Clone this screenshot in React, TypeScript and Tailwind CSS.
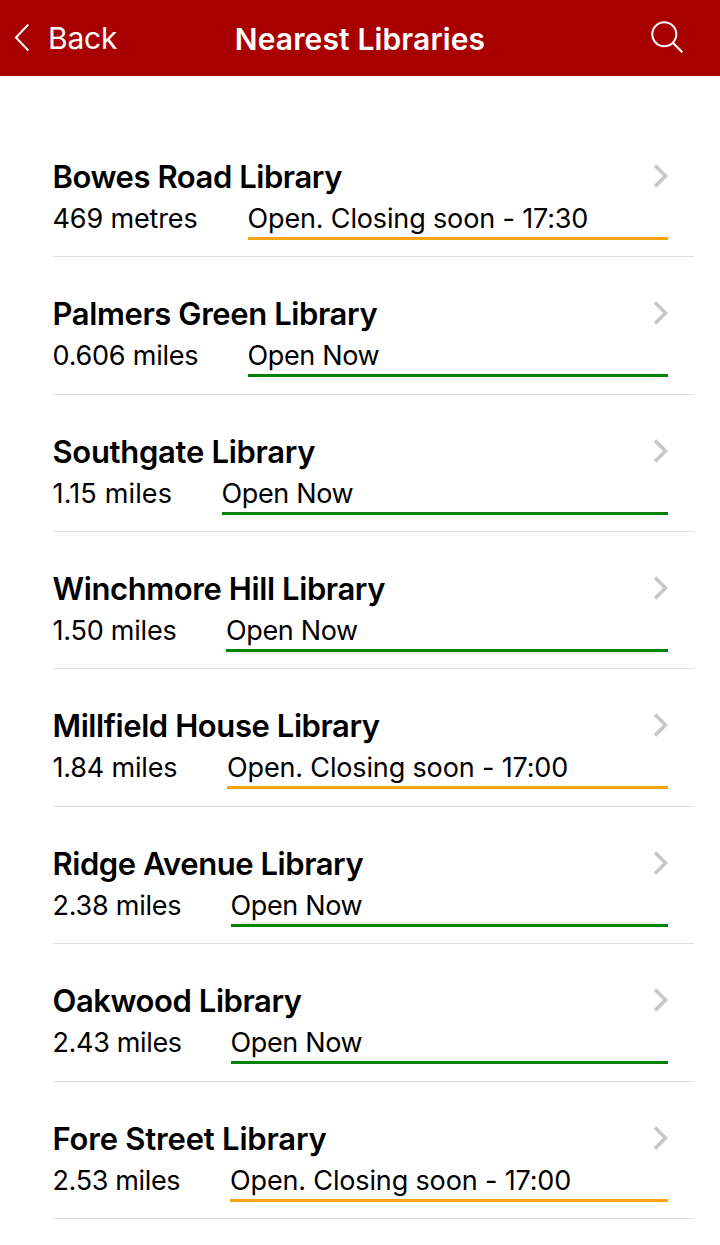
import React from "react";

type Status = "open" | "closing";

interface Library {
  id: number;
  name: string;
  nameTracking: string;
  distance: string;
  distanceClass: string;
  status: Status;
  label: string;
}

const libraries: Library[] = [
  { id: 1, name: "Bowes Road Library", nameTracking: "tracking-[-0.44px]", distance: "469 metres", distanceClass: "w-[195px] tracking-[-0.14px]", status: "closing", label: "Open. Closing soon - 17:30" },
  { id: 2, name: "Palmers Green Library", nameTracking: "tracking-[-0.4px]", distance: "0.606 miles", distanceClass: "w-[195px] tracking-[-0.22px]", status: "open", label: "Open Now" },
  { id: 3, name: "Southgate Library", nameTracking: "tracking-[-0.3px]", distance: "1.15 miles", distanceClass: "w-[169px] tracking-[0.15px]", status: "open", label: "Open Now" },
  { id: 4, name: "Winchmore Hill Library", nameTracking: "tracking-[-0.4px]", distance: "1.50 miles", distanceClass: "w-[173.5px] tracking-[-0.22px]", status: "open", label: "Open Now" },
  { id: 5, name: "Millfield House Library", nameTracking: "tracking-[-0.42px]", distance: "1.84 miles", distanceClass: "w-[174.5px] tracking-[-0.18px]", status: "closing", label: "Open. Closing soon - 17:00" },
  { id: 6, name: "Ridge Avenue Library", nameTracking: "tracking-[-0.44px]", distance: "2.38 miles", distanceClass: "w-[178px] tracking-[-0.25px]", status: "open", label: "Open Now" },
  { id: 7, name: "Oakwood Library", nameTracking: "tracking-[-0.43px]", distance: "2.43 miles", distanceClass: "w-[178px] tracking-[-0.35px]", status: "open", label: "Open Now" },
  { id: 8, name: "Fore Street Library", nameTracking: "tracking-[-0.2px]", distance: "2.53 miles", distanceClass: "w-[177.5px] tracking-[-0.35px]", status: "closing", label: "Open. Closing soon - 17:00" },
];

const Header: React.FC = () => {
  return (
    <header className="grid h-[76px] grid-cols-[1fr_auto_1fr] items-center bg-[#a80000] text-white">
      <button className="flex items-center gap-[19px] pl-[14px] text-[30px] leading-9 tracking-[-0.2px]">
        <svg width="15" height="28" viewBox="0 0 15 28" fill="none" stroke="currentColor" strokeWidth="2">
          <path d="M14.3 0.5 L2 13.5 L14.3 26.5" />
        </svg>
        Back
      </button>
      <h1 className="pt-0.5 text-[30px] leading-9 font-semibold tracking-[0.12px]">Nearest Libraries</h1>
      <button className="flex justify-end pr-9 pb-0.5" aria-label="Search">
        <svg width="34" height="34" viewBox="0 0 34 34" fill="none" stroke="currentColor" strokeWidth="2">
          <circle cx="14.3" cy="14.3" r="12" />
          <path d="M22.8 22.8 L32.3 32.3" strokeWidth="2.3" />
        </svg>
      </button>
    </header>
  );
};

const LibraryRow: React.FC<{ library: Library }> = ({ library }) => {
  return (
    <li className="h-[137.36px] border-b border-[#dedede] pt-[37px] pr-[26px]">
      <div className="flex h-[41px] items-start justify-between">
        <h2 className={`text-[31px] leading-10 font-semibold ${library.nameTracking}`}>{library.name}</h2>
        <svg className="mt-[7px]" width="16" height="24" viewBox="0 0 16 24" fill="none" stroke="#c7c7cc" strokeWidth="3.6">
          <path d="M3 1.5 L13.5 12 L3 22.5" />
        </svg>
      </div>
      <div className="flex h-[42px] text-[27px] leading-[42px]">
        <span className={`shrink-0 ${library.distanceClass}`}>{library.distance}</span>
        <span
          className={`flex-1 whitespace-nowrap border-b-[3px] ${
            library.status === "open"
              ? "border-[#048204] tracking-[-0.35px]"
              : "border-[#fba30f] tracking-[-0.15px]"
          }`}
        >
          {library.label}
        </span>
      </div>
    </li>
  );
};

const App: React.FC = () => {
  return (
    <div className="h-[1245px] w-[720px] overflow-hidden bg-white font-['Inter','Liberation_Sans',sans-serif] text-black">
      <Header />
      <ul className="pt-[44px] pr-[26px] pl-[52.5px]">
        {libraries.map((library) => (
          <LibraryRow key={library.id} library={library} />
        ))}
      </ul>
    </div>
  );
};

export default App;
